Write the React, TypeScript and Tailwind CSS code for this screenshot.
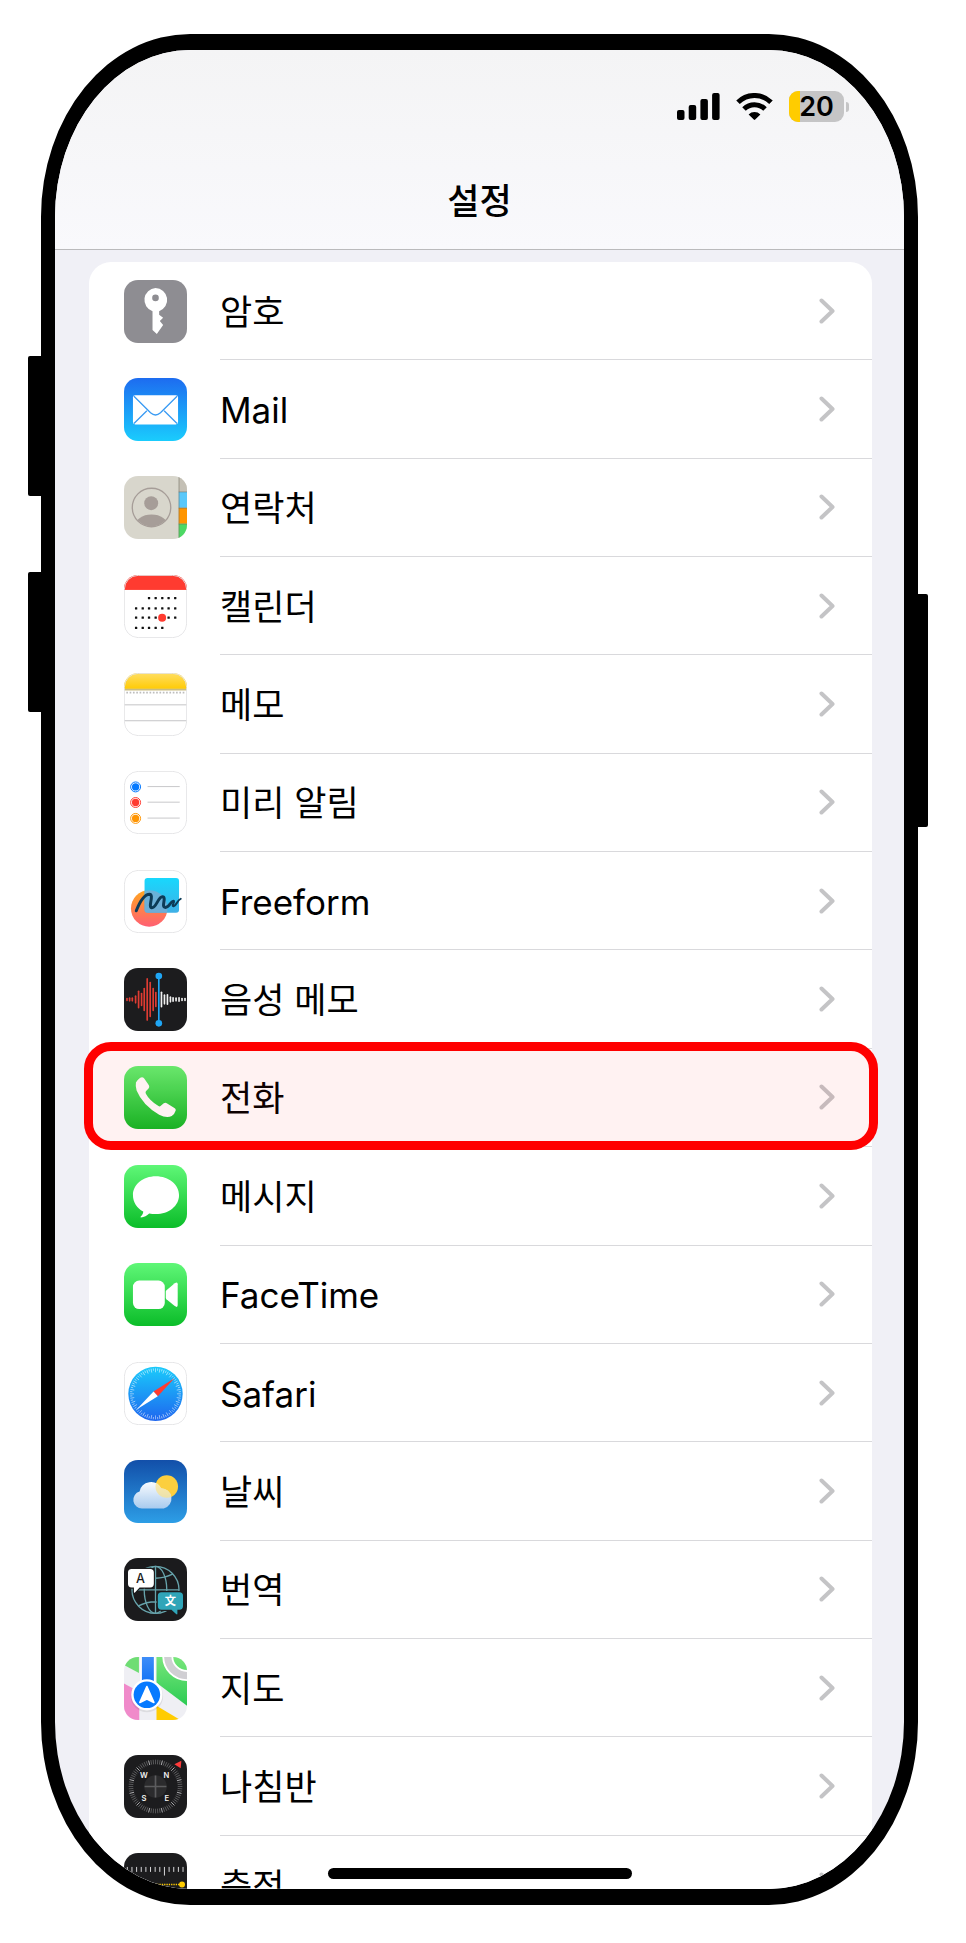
import clsx from "clsx";
import type { ReactNode } from "react";

type SettingsItem = {
  label: string;
  icon: ReactNode;
  highlighted?: boolean;
};

type AppIconProps = {
  id: string;
  from: string;
  to?: string;
  outlined?: boolean;
  children: ReactNode;
};

// Every app icon is drawn on a 190 unit square
function AppIcon({ id, from, to, outlined, children }: AppIconProps) {
  return (
    <svg
      viewBox="0 0 190 190"
      aria-hidden="true"
      className="size-[63px] shrink-0 overflow-hidden rounded-[14px]"
    >
      <defs>
        <linearGradient id={`${id}-bg`} x1="0" y1="0" x2="0" y2="1">
          <stop offset="0" stopColor={from} />
          <stop offset="1" stopColor={to ?? from} />
        </linearGradient>
      </defs>
      <rect width="190" height="190" fill={`url(#${id}-bg)`} />
      {children}
      {outlined && (
        <rect
          x="1"
          y="1"
          width="188"
          height="188"
          rx="42"
          fill="none"
          stroke="#e4e4e6"
          strokeWidth="3"
        />
      )}
    </svg>
  );
}

function PasswordsIcon() {
  return (
    <AppIcon id="passwords" from="#8e8d92">
      <path
        fill="#fff"
        fillRule="evenodd"
        d="M95 24a36 36 0 0 1 11 70v11l12 9-10 10 10 12-19 27-13-12V94a36 36 0 0 1 9-70zm0 20a10 10 0 1 0 0 20 10 10 0 0 0 0-20z"
      />
    </AppIcon>
  );
}

function MailIcon() {
  return (
    <AppIcon id="mail" from="#1d6cf0" to="#1accfd">
      <rect x="27" y="52" width="136" height="88" rx="7" fill="#fff" />
      <g fill="none" stroke="#3a9bf3" strokeWidth="4">
        <path d="M30 55l50 50q15 13 30 0l50-50" />
        <path d="M30 137l39-38M160 137l-39-38" />
      </g>
    </AppIcon>
  );
}

function ContactsIcon() {
  return (
    <AppIcon id="contacts" from="#d8d6cc">
      <rect x="165" y="0" width="25" height="48" fill="#c4c0b5" />
      <rect x="165" y="48" width="25" height="48" fill="#5ac8fa" />
      <rect x="165" y="96" width="25" height="48" fill="#ff9500" />
      <rect x="165" y="144" width="25" height="46" fill="#4cd964" />
      <path
        d="M166 0v190M165 48h25M165 97h25M165 145h25"
        stroke="#6f6a5c"
        strokeOpacity="0.5"
        strokeWidth="3"
      />
      <clipPath id="contacts-face">
        <circle cx="83" cy="95" r="57" />
      </clipPath>
      <circle cx="83" cy="95" r="58" fill="none" stroke="#a69d98" strokeWidth="4" />
      <circle cx="82" cy="82" r="21" fill="#a69d98" />
      <ellipse
        cx="83"
        cy="152"
        rx="50"
        ry="36"
        fill="#a69d98"
        clipPath="url(#contacts-face)"
      />
    </AppIcon>
  );
}

const calendarDots = [
  { y: 69, columns: [75, 95, 115, 134, 154] },
  { y: 100, columns: [36, 56, 75, 95, 115, 134, 154] },
  { y: 128, columns: [36, 56, 75, 95, 134, 154] },
  { y: 159, columns: [36, 56, 75, 95, 115] },
];

function CalendarIcon() {
  return (
    <AppIcon id="calendar" from="#ffffff" outlined>
      {calendarDots.map((row) =>
        row.columns.map((x) => (
          <rect
            key={`${x}-${row.y}`}
            x={x - 3}
            y={row.y - 3}
            width="7"
            height="7"
            rx="1"
            fill="#111"
          />
        ))
      )}
      <circle cx="115" cy="129" r="12" fill="#ff3b30" />
      <rect width="190" height="45" fill="#ff3b30" />
    </AppIcon>
  );
}

function NotesIcon() {
  return (
    <AppIcon id="notes" from="#ffffff" outlined>
      <defs>
        <linearGradient id="notes-pad" x1="0" y1="0" x2="0" y2="1">
          <stop offset="0" stopColor="#ffde62" />
          <stop offset="1" stopColor="#ffcb05" />
        </linearGradient>
      </defs>
      <rect width="190" height="48" fill="url(#notes-pad)" />
      <path d="M0 50h190" stroke="#c9bc80" strokeWidth="5" />
      <path
        d="M7 59h180"
        stroke="#bdbdbd"
        strokeWidth="5"
        strokeDasharray="5 5"
      />
      <path d="M0 96h190M0 144h190" stroke="#c4c4c6" strokeWidth="3" />
    </AppIcon>
  );
}

function RemindersIcon() {
  const bullets = [
    { y: 48, color: "#067aff" },
    { y: 95, color: "#ff3b30" },
    { y: 143, color: "#ff9502" },
  ];

  return (
    <AppIcon id="reminders" from="#ffffff" outlined>
      {bullets.map(({ y, color }) => (
        <g key={y}>
          <circle cx="35" cy={y} r="15" fill="none" stroke={color} strokeWidth="3" />
          <circle cx="35" cy={y} r="11" fill={color} />
          <path d={`M71 ${y - 1}h97`} stroke="#c8c8ca" strokeWidth="3" />
        </g>
      ))}
    </AppIcon>
  );
}

function FreeformIcon() {
  return (
    <AppIcon id="freeform" from="#ffffff" outlined>
      <defs>
        <linearGradient id="freeform-sun" x1="0" y1="0" x2="0" y2="1">
          <stop offset="0" stopColor="#ffa51f" />
          <stop offset="1" stopColor="#ff5f73" />
        </linearGradient>
        <linearGradient id="freeform-card" x1="0" y1="0" x2="0" y2="1">
          <stop offset="0" stopColor="#18d8fd" />
          <stop offset="1" stopColor="#3fb0e6" />
        </linearGradient>
        <clipPath id="freeform-clip">
          <rect x="62" y="24" width="104" height="105" rx="9" />
        </clipPath>
      </defs>
      <circle cx="76" cy="116" r="55" fill="url(#freeform-sun)" />
      <rect x="62" y="24" width="104" height="105" rx="9" fill="url(#freeform-card)" />
      <circle
        cx="76"
        cy="116"
        r="55"
        fill="#7fabd0"
        fillOpacity="0.75"
        clipPath="url(#freeform-clip)"
      />
      <path
        d="M37 123C46 100 60 73 77 73C92 74 71 113 84 114C98 114 103 80 116 81C130 82 110 112 125 113C138 113 139 94 149 94"
        fill="none"
        stroke="#0c3b57"
        strokeWidth="9"
        strokeLinecap="round"
      />
      <path
        d="M149 94C155 95 141 110 150 109C158 108 161 90 171 87"
        fill="none"
        stroke="#0c3b57"
        strokeWidth="6"
        strokeLinecap="round"
      />
    </AppIcon>
  );
}

function VoiceMemosIcon() {
  const recorded = [
    [9, 3],
    [17, 4],
    [25, 4],
    [35, 10],
    [44, 25],
    [53, 18],
    [61, 33],
    [70, 62],
    [79, 51],
    [88, 33],
    [96, 21],
  ];
  const upcoming = [
    [113, 22],
    [122, 13],
    [131, 14],
    [140, 7],
    [148, 5],
    [157, 4],
    [166, 5],
    [175, 3],
    [184, 3],
  ];

  return (
    <AppIcon id="voice" from="#1c1c1e">
      <g strokeWidth="5" strokeLinecap="round">
        {recorded.map(([x, h]) => (
          <path key={x} d={`M${x} ${95 - h}v${h * 2}`} stroke="#e03c33" />
        ))}
        {upcoming.map(([x, h]) => (
          <path key={x} d={`M${x} ${95 - h}v${h * 2}`} stroke="#f2f2f2" />
        ))}
      </g>
      <path d="M105 24v143" stroke="#1fa6f5" strokeWidth="5" />
      <circle cx="105" cy="24" r="10" fill="#1fa6f5" />
      <circle cx="105" cy="167" r="10" fill="#1fa6f5" />
    </AppIcon>
  );
}

function PhoneIcon() {
  return (
    <AppIcon id="phone" from="#62f372" to="#0ebb26">
      <path
        fill="#fff"
        d="M36 50Q44 36 54 34Q58 34 61 38L75 58Q78 64 74 68L66 76Q64 80 66 84Q78 106 104 121Q108 123 111 120L120 112Q125 110 129 112L152 127Q157 130 156 134Q152 146 144 151Q128 158 106 147Q56 118 38 74Q34 60 36 50Z"
      />
    </AppIcon>
  );
}

function MessagesIcon() {
  return (
    <AppIcon id="messages" from="#5ff777" to="#0bbd29">
      <path
        fill="#fff"
        d="M96 34c39 0 70 25 70 57s-31 57-70 57c-7 0-14-1-20-2-7 7-15 11-25 12-1 0-2-1-1-2 5-5 8-10 8-16C39 130 27 112 27 91c0-32 30-57 69-57z"
      />
    </AppIcon>
  );
}

function FaceTimeIcon() {
  return (
    <AppIcon id="facetime" from="#5ff777" to="#0bbd29">
      <rect x="27" y="53" width="96" height="86" rx="19" fill="#fff" />
      <path
        fill="#fff"
        d="M128 82l25-21q9-6 9 3v63q0 9-9 3l-25-21q-2-2-2-5V87q0-3 2-5z"
      />
    </AppIcon>
  );
}

function SafariIcon() {
  const ticks = Array.from({ length: 72 }, (_, index) => index);

  return (
    <AppIcon id="safari" from="#ffffff" outlined>
      <defs>
        <linearGradient id="safari-dial" x1="0" y1="0" x2="0" y2="1">
          <stop offset="0" stopColor="#1acbfb" />
          <stop offset="1" stopColor="#1e66ef" />
        </linearGradient>
      </defs>
      <circle cx="95" cy="96" r="82" fill="url(#safari-dial)" />
      {ticks.map((tick) => (
        <path
          key={tick}
          d={`M95 19v${tick % 2 === 0 ? 12 : 7}`}
          stroke="#fff"
          strokeOpacity="0.75"
          strokeWidth="2"
          transform={`rotate(${tick * 5} 95 96)`}
        />
      ))}
      <path d="M152 49L89 89L102 103Z" fill="#ff3b30" />
      <path d="M38 143L89 89L102 103Z" fill="#fff" />
    </AppIcon>
  );
}

function WeatherIcon() {
  return (
    <AppIcon id="weather" from="#124fa9" to="#2d9ee6">
      <defs>
        <linearGradient id="weather-cloud" x1="0" y1="0" x2="0" y2="1">
          <stop offset="0" stopColor="#f8fbff" />
          <stop offset="1" stopColor="#a9cbee" />
        </linearGradient>
        <clipPath id="weather-clip">
          <path d="M55 146a26 26 0 0 1-8-51 35 35 0 0 1 65-10 31 31 0 0 1 8 61z" />
        </clipPath>
      </defs>
      <circle cx="129" cy="80" r="34" fill="#fccf3e" />
      <path
        fill="url(#weather-cloud)"
        d="M55 146a26 26 0 0 1-8-51 35 35 0 0 1 65-10 31 31 0 0 1 8 61z"
      />
      <circle
        cx="129"
        cy="80"
        r="34"
        fill="#fbe38a"
        fillOpacity="0.7"
        clipPath="url(#weather-clip)"
      />
    </AppIcon>
  );
}

function TranslateIcon() {
  return (
    <AppIcon id="translate" from="#1b1b1d">
      <g fill="none" stroke="#67a3ab" strokeWidth="4">
        <circle cx="95" cy="96" r="71" />
        <ellipse cx="95" cy="96" rx="34" ry="71" />
        <path d="M95 25v142M24 96h142M42 48q53 26 106 0M42 145q53-26 106 0" />
      </g>
      <path
        d="M23 33h56q11 0 11 11v34q0 11-11 11H47L33 104q-3 3-3-2V89h-7q-11 0-11-11V44q0-11 11-11z"
        fill="#fff"
        stroke="#1b1b1d"
        strokeWidth="7"
        paintOrder="stroke"
      />
      <path
        d="M113 103h54q11 0 11 11v31q0 11-11 11h-6v12q0 4-4 1l-14-13h-30q-11 0-11-11v-31q0-11 11-11z"
        fill="#30a5b8"
        stroke="#1b1b1d"
        strokeWidth="7"
        paintOrder="stroke"
      />
      <text
        x="50"
        y="76"
        textAnchor="middle"
        fill="#1b1b1d"
        className="font-['Inter',sans-serif] text-[38px] font-medium"
      >
        A
      </text>
      <text
        x="140"
        y="142"
        textAnchor="middle"
        fill="#fff"
        className="font-['Noto_Sans_CJK_KR',sans-serif] text-[34px] font-bold"
      >
        文
      </text>
    </AppIcon>
  );
}

function MapsIcon() {
  return (
    <AppIcon id="maps" from="#efeff4">
      <defs>
        <linearGradient id="maps-park" x1="0" y1="0" x2="0" y2="1">
          <stop offset="0" stopColor="#78e67b" />
          <stop offset="1" stopColor="#2bcb53" />
        </linearGradient>
        <linearGradient id="maps-road" x1="0" y1="0" x2="0" y2="1">
          <stop offset="0" stopColor="#3e8df8" />
          <stop offset="1" stopColor="#0a6ff5" />
        </linearGradient>
      </defs>
      <path d="M0 24L0 0H45V48Z" fill="#6fdd74" />
      <path d="M98 0H190V147L98 78Z" fill="url(#maps-park)" />
      <path d="M0 80L46 105V190H0Z" fill="#f08aca" />
      <path d="M98 147L170 190H98Z" fill="#ffcc02" />
      <circle cx="190" cy="-2" r="58" fill="none" stroke="#fff" strokeWidth="33" />
      <circle cx="190" cy="-2" r="58" fill="none" stroke="#d0cfd3" strokeWidth="22" />
      <path d="M49 0h46v90H49z" fill="#fff" />
      <path d="M54 0h36v90H54z" fill="url(#maps-road)" />
      <circle cx="69" cy="118" r="49" fill="#000" fillOpacity="0.08" />
      <circle cx="69" cy="114" r="47" fill="#fff" />
      <circle cx="69" cy="114" r="40" fill="#067aff" />
      <path
        d="M69 89L90 137L69 127L48 137Z"
        fill="#fff"
        stroke="#fff"
        strokeWidth="5"
        strokeLinejoin="round"
      />
    </AppIcon>
  );
}

function CompassIcon() {
  const ticks = Array.from({ length: 72 }, (_, index) => index);
  const points = [
    { name: "W", x: 60, y: 68 },
    { name: "N", x: 128, y: 68 },
    { name: "S", x: 60, y: 140 },
    { name: "E", x: 129, y: 140 },
  ];

  return (
    <AppIcon id="compass" from="#1c1c1e">
      {ticks.map((tick) => (
        <path
          key={tick}
          d="M95 14v14"
          stroke={tick % 6 === 3 ? "#e8e8ea" : "#747476"}
          strokeWidth="2"
          transform={`rotate(${tick * 5} 95 95)`}
        />
      ))}
      <circle cx="95" cy="95" r="34" fill="#2b2b2d" />
      <path d="M95 62v66M62 95h66" stroke="#5c5c5e" strokeWidth="5" />
      <path d="M152 28L173 17L171 40Z" fill="#ff3b3b" />
      {points.map(({ name, x, y }) => (
        <text
          key={name}
          x={x}
          y={y}
          textAnchor="middle"
          fill="#f2f2f2"
          className="font-['Inter',sans-serif] text-[23px] font-semibold"
        >
          {name}
        </text>
      ))}
    </AppIcon>
  );
}

function MeasureIcon() {
  const ticks = Array.from({ length: 13 }, (_, index) => index);

  return (
    <AppIcon id="measure" from="#1c1c1e">
      {ticks.map((tick) => (
        <path
          key={tick}
          d={`M${10 + tick * 14} 42v${tick === 8 ? 26 : 15}`}
          stroke="#d8d8da"
          strokeWidth="3"
        />
      ))}
      <path
        d="M16 95h154"
        stroke="#ffcc00"
        strokeWidth="4"
        strokeDasharray="4 3"
      />
      <circle cx="175" cy="95" r="9" fill="#ffcc00" />
    </AppIcon>
  );
}

const items: SettingsItem[] = [
  { label: "암호", icon: <PasswordsIcon /> },
  { label: "Mail", icon: <MailIcon /> },
  { label: "연락처", icon: <ContactsIcon /> },
  { label: "캘린더", icon: <CalendarIcon /> },
  { label: "메모", icon: <NotesIcon /> },
  { label: "미리 알림", icon: <RemindersIcon /> },
  { label: "Freeform", icon: <FreeformIcon /> },
  { label: "음성 메모", icon: <VoiceMemosIcon /> },
  { label: "전화", icon: <PhoneIcon />, highlighted: true },
  { label: "메시지", icon: <MessagesIcon /> },
  { label: "FaceTime", icon: <FaceTimeIcon /> },
  { label: "Safari", icon: <SafariIcon /> },
  { label: "날씨", icon: <WeatherIcon /> },
  { label: "번역", icon: <TranslateIcon /> },
  { label: "지도", icon: <MapsIcon /> },
  { label: "나침반", icon: <CompassIcon /> },
  { label: "측정", icon: <MeasureIcon /> },
];

function StatusBar() {
  return (
    <div className="flex h-[31px] items-center justify-end gap-4 pr-[55px]">
      <svg viewBox="0 0 43 27" aria-hidden="true" className="h-[27px] w-[43px]">
        <rect x="0" y="17" width="7.5" height="10" rx="2" />
        <rect x="11.7" y="12" width="7.5" height="15" rx="2" />
        <rect x="23.4" y="6" width="7.5" height="21" rx="2" />
        <rect x="35.1" y="0" width="7.5" height="27" rx="2" />
      </svg>
      <svg viewBox="0 0 37 27" aria-hidden="true" className="h-[27px] w-[37px]">
        <g fill="none" stroke="#000" strokeWidth="5">
          <path d="M2 9.2a23.6 23.6 0 0 1 33 0" />
          <path d="M8 16a15 15 0 0 1 21 0" />
        </g>
        <path d="M12.6 21.4a8.6 8.6 0 0 1 11.8 0l-5.2 5.2q-.7.7-1.4 0z" />
      </svg>
      <div className="flex items-center gap-0.5">
        <div className="relative flex h-[31px] w-[55px] items-center justify-center overflow-hidden rounded-[9px] bg-[#c5c5c6]">
          <div className="absolute inset-y-0 left-0 w-1/5 bg-[#ffcc00]" />
          <span className="relative font-['Inter',sans-serif] text-[27px] leading-[31px] font-semibold">
            20
          </span>
        </div>
        <div className="h-[10px] w-[3px] rounded-r-full bg-[#c5c5c6]" />
      </div>
    </div>
  );
}

function SettingsRow({ item, last }: { item: SettingsItem; last: boolean }) {
  return (
    <li className="relative">
      <a href="#" className="flex h-full items-center gap-[33px] pl-[35px]">
        {item.icon}
        <span
          className={clsx(
            "flex h-full flex-1 items-center justify-between pr-[37px]",
            !last && "border-b border-[#d9d9dc]"
          )}
        >
          <span className="pt-0.5 text-[35px] leading-[48px]">{item.label}</span>
          <svg
            viewBox="0 0 16 26"
            aria-hidden="true"
            className="h-[26px] w-4 shrink-0"
          >
            <path
              d="M2.5 2.5L13.5 13L2.5 23.5"
              fill="none"
              stroke="#c4c4c6"
              strokeWidth="4"
              strokeLinecap="round"
              strokeLinejoin="round"
            />
          </svg>
        </span>
      </a>
      {item.highlighted && (
        <div className="pointer-events-none absolute -top-[7px] -right-1.5 -bottom-[3px] -left-[5px] z-10 rounded-[27px] border-[9px] border-[#ff0000] bg-[#ff0000]/5" />
      )}
    </li>
  );
}

export default function App() {
  return (
    <div className="flex h-screen bg-white pt-[34px] pr-[38px] pb-[38px] pl-7 font-['Inter','Noto_Sans_CJK_KR',sans-serif] text-black">
      <div className="flex w-[13px] flex-col gap-[76px] pt-[322px]">
        <div className="h-[140px] rounded-l-xs bg-black" />
        <div className="h-[140px] rounded-l-xs bg-black" />
      </div>

      <div className="relative flex flex-1 flex-col overflow-hidden rounded-[149px_/_183px] border-x-[14px] border-y-[16px] border-black bg-[#f0f0f6]">
        <header className="border-b border-[#bababc] bg-linear-to-b from-[#f4f4f5] to-[#f9f9fc] pt-[41px] pb-[28px]">
          <StatusBar />
          <h1 className="mt-[59px] text-center text-[35px] leading-[40px] font-medium">
            설정
          </h1>
        </header>

        <main className="min-h-0 flex-1 overflow-y-auto pt-3 pr-8 pl-[34px] [scrollbar-width:none]">
          <ul className="grid h-[calc(100%+45px)] auto-rows-[minmax(80px,1fr)] rounded-t-[22px] bg-white">
            {items.map((item, index) => (
              <SettingsRow
                key={item.label}
                item={item}
                last={index === items.length - 1}
              />
            ))}
          </ul>
        </main>

        <div className="absolute bottom-[10px] left-1/2 h-[11px] w-[304px] -translate-x-1/2 rounded-full bg-black" />
      </div>

      <div className="w-[10px] pt-[560px]">
        <div className="h-[233px] rounded-r-xs bg-black" />
      </div>
    </div>
  );
}
